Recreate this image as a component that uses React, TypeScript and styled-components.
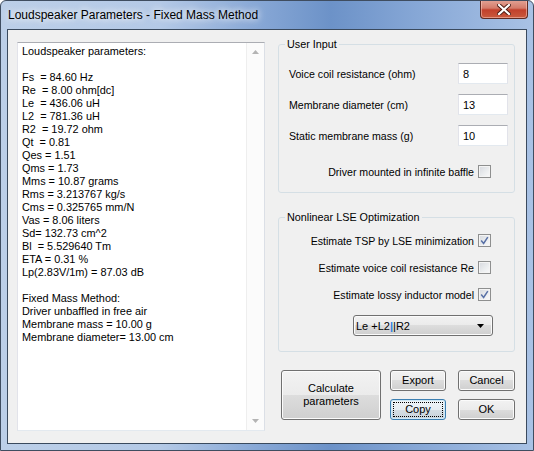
import styled, { createGlobalStyle } from 'styled-components';

const GlobalStyle = createGlobalStyle`
  html, body {
    margin: 0;
    padding: 0;
    background: #ffffff;
  }
  body {
    font-family: "Liberation Sans", Arial, sans-serif;
    font-size: 11px;
    color: #000;
  }
`;

const Window = styled.div`
  width: 534px;
  height: 451px;
  box-sizing: border-box;
  border: 1px solid #3f4d60;
  border-radius: 6px 6px 0 0;
  background: linear-gradient(
    to right,
    #bccfe8 0%,
    #b4c9e6 30%,
    #88a8d6 48%,
    #6c92c8 62%,
    #86a7d6 78%,
    #a9c2e5 100%
  );
  display: flex;
  flex-direction: column;
  overflow: hidden;
`;

const TitleBar = styled.div`
  height: 28px;
  flex-shrink: 0;
  display: flex;
  align-items: center;
  padding-left: 7px;
  padding-right: 5px;
`;

const Title = styled.span`
  font-family: "Liberation Sans", Arial, sans-serif;
  font-size: 12px;
  color: #000;
  text-shadow: 0 0 6px rgba(255, 255, 255, 0.95), 0 0 10px rgba(255, 255, 255, 0.8);
`;

const CloseButton = styled.div`
  margin-left: auto;
  align-self: flex-start;
  margin-top: -1px;
  width: 48px;
  height: 19px;
  box-sizing: border-box;
  border: 1px solid #5f2a22;
  border-top: none;
  border-radius: 0 0 4px 4px;
  background: linear-gradient(to bottom, #e3a496 0%, #d47b6a 45%, #c2402b 55%, #c95a3e 100%);
  box-shadow: inset 0 0 0 1px rgba(255, 210, 200, 0.5);
  display: flex;
  align-items: center;
  justify-content: center;
`;

const Client = styled.div`
  flex: 1;
  margin: 0 6px 6px;
  border: 1px solid #3a4a5e;
  background: #f0f0f0;
  display: flex;
  gap: 13px;
  padding: 8px 11px 12px 9px;
  min-height: 0;
`;

const TextBox = styled.div`
  width: 248px;
  margin-top: 4px;
  box-sizing: border-box;
  border: 1px solid #abadb3;
  border-color: #abadb3 #dbdfe6 #e3e9ef #e2e3ea;
  background: #fff;
  display: flex;
`;

const TextContent = styled.div`
  flex: 1;
  padding: 2px 4px;
  font-size: 10.9px;
  line-height: 13px;
  white-space: pre;
`;

const ScrollTrack = styled.div`
  width: 17px;
  background: #fbfbfb;
  border-left: 1px solid #eeeeee;
  display: flex;
  flex-direction: column;
  justify-content: space-between;
  align-items: center;
  padding: 7px 0;
`;

const RightColumn = styled.div`
  flex: 1;
  display: flex;
  flex-direction: column;
  font-size: 10.6px;
`;

const Group = styled.fieldset<{ $gapTop?: number }>`
  margin: ${(p) => p.$gapTop ?? 0}px 0 0;
  padding: 0;
  border: 1px solid #d5dfe5;
  border-radius: 3px;
  min-width: 0;
`;

const Legend = styled.legend`
  margin-left: 6px;
  padding: 0 2px;
  font-size: 10.8px;
  line-height: 13px;
`;

const GroupBody = styled.div<{ $pad: string; $gap: number }>`
  padding: ${(p) => p.$pad};
  display: flex;
  flex-direction: column;
  gap: ${(p) => p.$gap}px;
`;

const FieldRow = styled.div`
  display: flex;
  align-items: center;
  justify-content: space-between;
  height: 21px;
`;

const Field = styled.input`
  width: 50px;
  height: 21px;
  box-sizing: border-box;
  border: 1px solid;
  border-color: #abadb3 #e2e3ea #e3e9ef #e2e3ea;
  background: #fff;
  font-family: "Liberation Sans", Arial, sans-serif;
  font-size: 11px;
  padding: 0 0 0 4px;
  outline: none;
`;

const CheckRow = styled.label<{ $mt?: number; $mb?: number }>`
  display: flex;
  align-items: center;
  justify-content: flex-end;
  gap: 4px;
  height: 13px;
  padding-right: 23px;
  margin-top: ${(p) => p.$mt ?? 0}px;
  margin-bottom: ${(p) => p.$mb ?? 0}px;
`;

const Box = styled.span`
  width: 13px;
  height: 13px;
  box-sizing: border-box;
  border: 1px solid #8e8f8f;
  background: linear-gradient(135deg, #d6d9de 0%, #eceef0 60%, #fafafa 100%);
  box-shadow: inset 0 0 0 1px #f4f4f4;
  display: flex;
  align-items: center;
  justify-content: center;
`;

const SelectRow = styled.div`
  display: flex;
  justify-content: flex-end;
  padding-right: 21px;
`;

const Select = styled.div`
  width: 140px;
  height: 21px;
  box-sizing: border-box;
  border: 1px solid #707070;
  border-radius: 3px;
  background: linear-gradient(to bottom, #f2f2f2 0%, #ebebeb 50%, #dddddd 50%, #cfcfcf 100%);
  box-shadow: inset 0 0 0 1px #fbfbfb;
  display: flex;
  align-items: center;
  padding: 0 8px 0 2px;
  font-size: 11px;
`;

const SelectText = styled.span`
  flex: 1;
`;

const Bar = styled.span`
  color: #2f7fe0;
  font-weight: bold;
`;

const ButtonArea = styled.div`
  margin-top: 18px;
  padding-left: 3px;
  display: flex;
  gap: 9px;
`;

const ButtonGrid = styled.div`
  display: grid;
  grid-template-columns: 56px 57px;
  grid-auto-rows: 21px;
  column-gap: 12px;
  row-gap: 8px;
`;

const Button = styled.button<{ $w?: number; $h?: number; $focused?: boolean }>`
  width: ${(p) => (p.$w ? `${p.$w}px` : '100%')};
  height: ${(p) => (p.$h ? `${p.$h}px` : '100%')};
  box-sizing: border-box;
  padding: 0;
  border: 1px solid ${(p) => (p.$focused ? '#3c7fb1' : '#707070')};
  border-radius: 3px;
  background: ${(p) =>
    p.$focused
      ? 'linear-gradient(to bottom, #f0f5f8 0%, #e6edf2 50%, #d6dfe5 50%, #c8d3db 100%)'
      : 'linear-gradient(to bottom, #f2f2f2 0%, #ebebeb 50%, #dddddd 50%, #cfcfcf 100%)'};
  box-shadow: inset 0 0 0 1px ${(p) => (p.$focused ? '#cfe9f7' : '#fbfbfb')};
  font-family: "Liberation Sans", Arial, sans-serif;
  font-size: 11px;
  line-height: 13px;
  color: #000;
  display: flex;
  align-items: center;
  justify-content: center;
  position: relative;
`;

const FocusRing = styled.span`
  position: absolute;
  inset: 2px;
  border: 1px dotted #000;
`;

const ArrowUp = () => (
  <svg width="7" height="4" viewBox="0 0 7 4">
    <path d="M0 4 L3.5 0 L7 4 Z" fill="#b4b4b4" />
  </svg>
);

const ArrowDown = ({ color = '#b4b4b4' }: { color?: string }) => (
  <svg width="7" height="4" viewBox="0 0 7 4">
    <path d="M0 0 L7 0 L3.5 4 Z" fill={color} />
  </svg>
);

const Check = ({ checked }: { checked?: boolean }) => (
  <Box>
    {checked && (
      <svg width="9" height="9" viewBox="0 0 9 9">
        <path d="M1.2 4.6 L3.6 7.4 L7.8 1.2" fill="none" stroke="#5870a6" strokeWidth="1.5" />
      </svg>
    )}
  </Box>
);

const report = [
  'Loudspeaker parameters:',
  '',
  'Fs  = 84.60 Hz',
  'Re  = 8.00 ohm[dc]',
  'Le  = 436.06 uH',
  'L2  = 781.36 uH',
  'R2  = 19.72 ohm',
  'Qt  = 0.81',
  'Qes = 1.51',
  'Qms = 1.73',
  'Mms = 10.87 grams',
  'Rms = 3.213767 kg/s',
  'Cms = 0.325765 mm/N',
  'Vas = 8.06 liters',
  'Sd= 132.73 cm^2',
  'Bl  = 5.529640 Tm',
  'ETA = 0.31 %',
  'Lp(2.83V/1m) = 87.03 dB',
  '',
  'Fixed Mass Method:',
  'Driver unbaffled in free air',
  'Membrane mass = 10.00 g',
  'Membrane diameter= 13.00 cm',
];

const inputs = [
  { label: 'Voice coil resistance (ohm)', value: '8' },
  { label: 'Membrane diameter (cm)', value: '13' },
  { label: 'Static membrane mass (g)', value: '10' },
];

const options = [
  { label: 'Estimate TSP by LSE minimization', checked: true },
  { label: 'Estimate voice coil resistance Re', checked: false },
  { label: 'Estimate lossy inductor model', checked: true },
];

const App = () => {
  return (
    <>
      <GlobalStyle />
      <Window>
        <TitleBar>
          <Title>Loudspeaker Parameters - Fixed Mass Method</Title>
          <CloseButton>
            <svg width="14" height="11" viewBox="0 0 14 11">
              <path
                d="M2 1 L12 10 M12 1 L2 10"
                stroke="#4a1a12"
                strokeWidth="4"
                strokeLinecap="square"
              />
              <path
                d="M2 1 L12 10 M12 1 L2 10"
                stroke="#ffffff"
                strokeWidth="2.2"
                strokeLinecap="square"
              />
            </svg>
          </CloseButton>
        </TitleBar>
        <Client>
          <TextBox>
            <TextContent>
              {report.map((line, i) => (
                <div key={`${i}_line`}>{line || ' '}</div>
              ))}
            </TextContent>
            <ScrollTrack>
              <ArrowUp />
              <ArrowDown />
            </ScrollTrack>
          </TextBox>
          <RightColumn>
            <Group>
              <Legend>User Input</Legend>
              <GroupBody $pad="12px 6px 0 10px" $gap={10}>
                {inputs.map((f) => (
                  <FieldRow key={f.label}>
                    <span>{f.label}</span>
                    <Field defaultValue={f.value} />
                  </FieldRow>
                ))}
              </GroupBody>
              <CheckRow $mt={19} $mb={14}>
                Driver mounted in infinite baffle
                <Check />
              </CheckRow>
            </Group>
            <Group $gapTop={18}>
              <Legend>Nonlinear LSE Optimization</Legend>
              <GroupBody $pad="10px 0 15px 0" $gap={14}>
                {options.map((o) => (
                  <CheckRow key={o.label}>
                    {o.label}
                    <Check checked={o.checked} />
                  </CheckRow>
                ))}
                <SelectRow>
                  <Select>
                    <SelectText>
                      Le +L2<Bar>|</Bar>|R2
                    </SelectText>
                    <ArrowDown color="#000" />
                  </Select>
                </SelectRow>
              </GroupBody>
            </Group>
            <ButtonArea>
              <Button $w={100} $h={50}>
                Calculate
                <br />
                parameters
              </Button>
              <ButtonGrid>
                <Button>Export</Button>
                <Button>Cancel</Button>
                <Button $focused>
                  Copy
                  <FocusRing />
                </Button>
                <Button>OK</Button>
              </ButtonGrid>
            </ButtonArea>
          </RightColumn>
        </Client>
      </Window>
    </>
  );
};

export default App;
